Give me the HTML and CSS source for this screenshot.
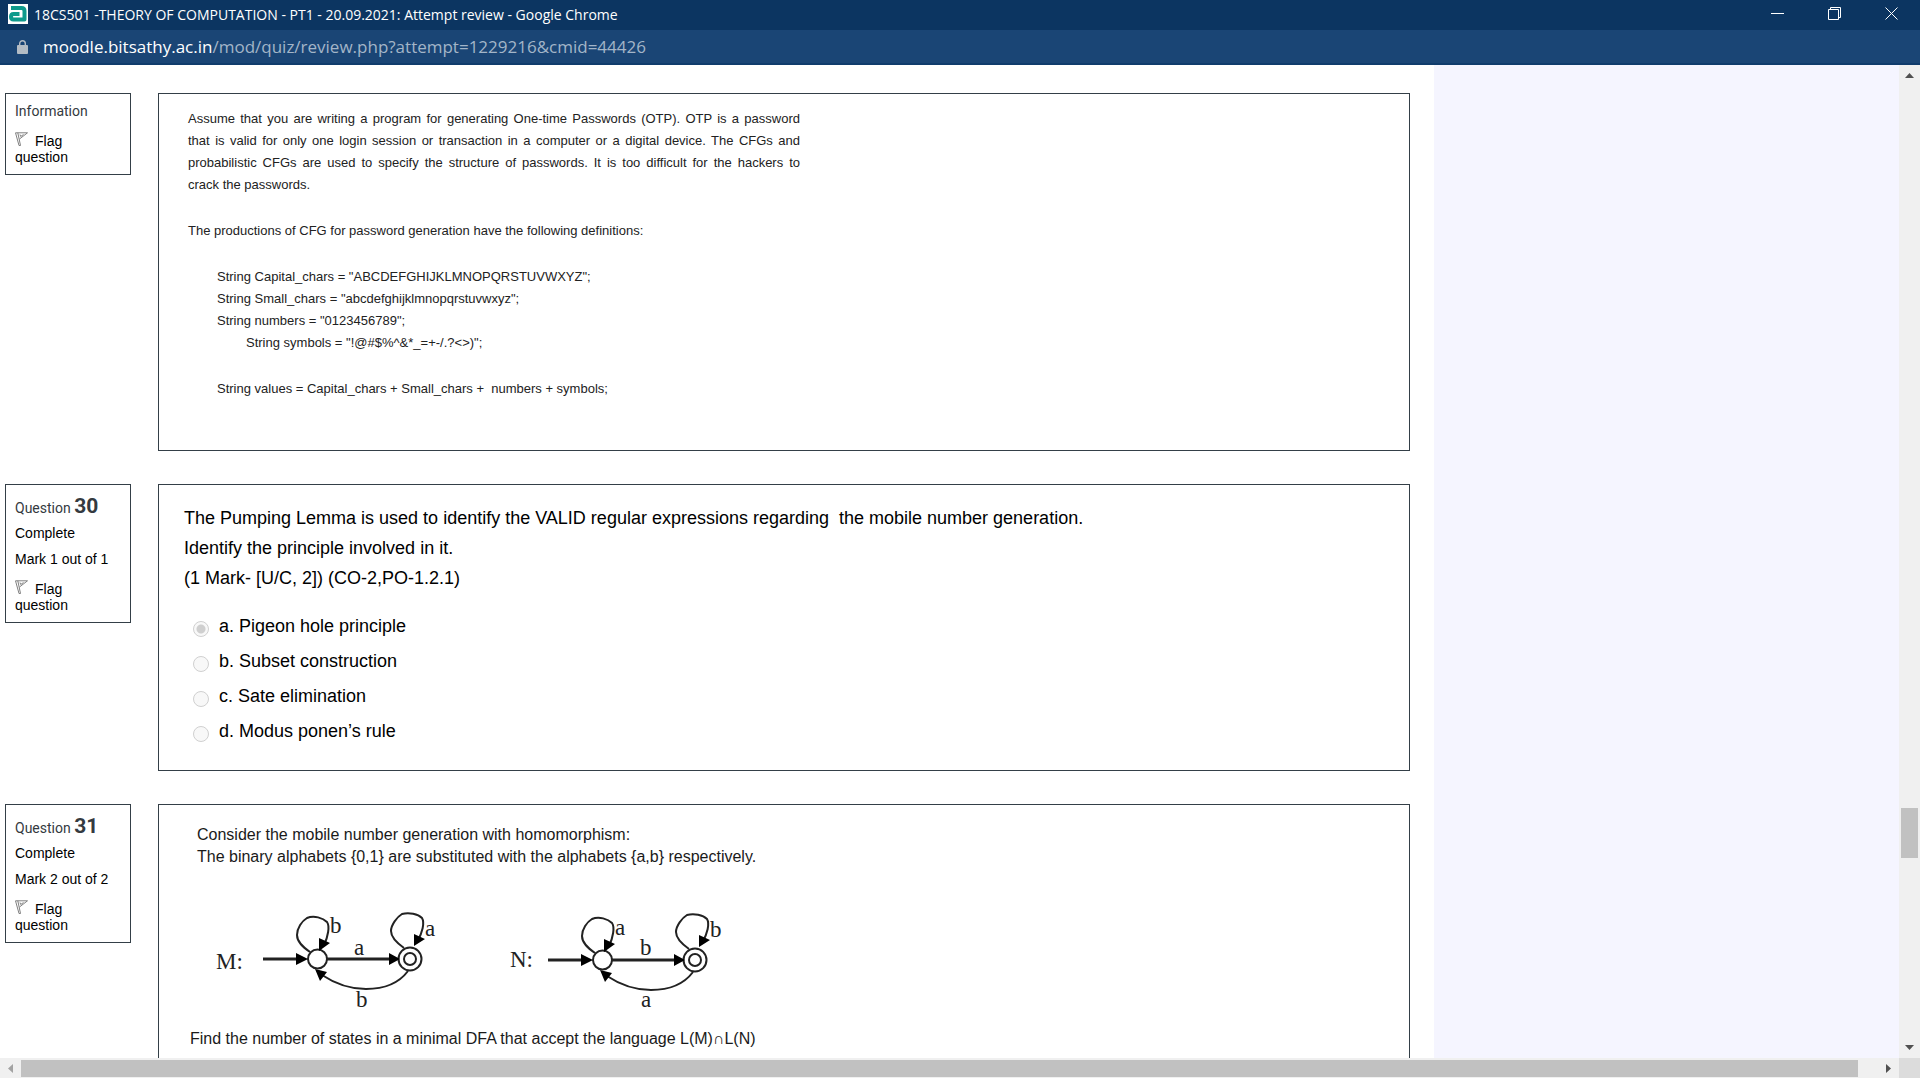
FILE: index.html
```html
<!DOCTYPE html>
<html lang="en">
<head>
<meta charset="utf-8">
<title>18CS501 -THEORY OF COMPUTATION - PT1 - 20.09.2021: Attempt review</title>
<link rel="stylesheet" href="styles.css">
</head>
<body>
<header class="titlebar">
  <svg class="favicon" width="20" height="20" viewBox="0 0 20 20" aria-hidden="true">
    <rect width="20" height="20" fill="#fff"/>
    <path d="M3 4H13.500Q16.500 4 16.500 7V15.500H5.500Q3 15.500 3 12.800Q3 10 5.500 10H11.500" fill="none" stroke="#0f9a8c" stroke-width="4" stroke-linejoin="round"/>
  </svg>
  <h1 class="title">18CS501 -THEORY OF COMPUTATION - PT1 - 20.09.2021: Attempt review - Google Chrome</h1>
  <div class="controls">
    <button class="control" aria-label="Minimize"><svg width="13" height="13" viewBox="0 0 13 13"><path d="M0 6.500H13"/></svg></button>
    <button class="control" aria-label="Restore"><svg width="13" height="13" viewBox="0 0 13 13"><path d="M.5 2.500H10.500V12.500H.5ZM2.500 2.500V.5H12.500V10.500H10.500"/></svg></button>
    <button class="control" aria-label="Close"><svg width="13" height="13" viewBox="0 0 13 13"><path d="M.5 .5L12.500 12.500M12.500 .5L.5 12.500"/></svg></button>
  </div>
</header>
<div class="addressbar">
  <svg class="lock" width="11" height="14" viewBox="0 0 11 14" aria-hidden="true">
    <rect y="5" width="11" height="9" rx="1" fill="#b4bcc4"/>
    <path d="M2.700 5.500V3.500a2.800 2.800 0 0 1 5.600 0V5.500" fill="none" stroke="#b4bcc4" stroke-width="1.400"/>
  </svg>
  <span class="url"><span class="host">moodle.bitsathy.ac.in</span>/mod/quiz/review.php?attempt=1229216&amp;cmid=44426</span>
</div>

<div class="viewport">
  <main class="page">
    <section class="question">
      <aside class="info">
        <h2 class="info-title">Information</h2>
        <a class="flag" href="#"><svg class="flag-icon" width="13" height="14" viewBox="0 0 13 14" aria-hidden="true"><path d="M.5 .8L4 13.500H5.500L2.800 .8M.5 .8H12.500L4.500 7M5 2.500L5.700 4.500L8.500 2.500"/></svg>Flag question</a>
      </aside>
      <div class="content stimulus">
        <p class="justified">Assume that you are writing a program for generating One-time Passwords (OTP). OTP is a password that is valid for only one login session or transaction in a computer or a digital device. The CFGs and probabilistic CFGs are used to specify the structure of passwords. It is too difficult for the hackers to crack&nbsp;the&nbsp;passwords.</p>
        <p>The productions of CFG for password generation have the following definitions:</p>
        <p class="code">String Capital_chars = "ABCDEFGHIJKLMNOPQRSTUVWXYZ";<br>String Small_chars = "abcdefghijklmnopqrstuvwxyz";<br>String numbers = "0123456789";<br><span class="deeper">String symbols = "!@#$%^&amp;*_=+-/.?&lt;&gt;)";</span></p>
        <p class="code">String values = Capital_chars + Small_chars +&nbsp; numbers + symbols;</p>
      </div>
    </section>

    <section class="question">
      <aside class="info">
        <h2 class="info-title numbered">Question <span class="number">30</span></h2>
        <p class="state">Complete</p>
        <p class="grade">Mark 1 out of 1</p>
        <a class="flag" href="#"><svg class="flag-icon" width="13" height="14" viewBox="0 0 13 14" aria-hidden="true"><path d="M.5 .8L4 13.500H5.500L2.800 .8M.5 .8H12.500L4.500 7M5 2.500L5.700 4.500L8.500 2.500"/></svg>Flag question</a>
      </aside>
      <div class="content choice">
        <p>The Pumping Lemma is used to identify the VALID regular expressions regarding&nbsp; the mobile number generation.<br>Identify the principle involved in it.<br>(1 Mark- [U/C, 2]) (CO-2,PO-1.2.1)</p>
        <div class="answers">
          <div class="answer"><input type="radio" name="q30" id="q30a" checked disabled><label for="q30a">a. Pigeon hole principle</label></div>
          <div class="answer"><input type="radio" name="q30" id="q30b" disabled><label for="q30b">b. Subset construction</label></div>
          <div class="answer"><input type="radio" name="q30" id="q30c" disabled><label for="q30c">c. Sate elimination</label></div>
          <div class="answer"><input type="radio" name="q30" id="q30d" disabled><label for="q30d">d. Modus ponen’s rule</label></div>
        </div>
      </div>
    </section>

    <section class="question">
      <aside class="info">
        <h2 class="info-title numbered">Question <span class="number">31</span></h2>
        <p class="state">Complete</p>
        <p class="grade">Mark 2 out of 2</p>
        <a class="flag" href="#"><svg class="flag-icon" width="13" height="14" viewBox="0 0 13 14" aria-hidden="true"><path d="M.5 .8L4 13.500H5.500L2.800 .8M.5 .8H12.500L4.500 7M5 2.500L5.700 4.500L8.500 2.500"/></svg>Flag question</a>
      </aside>
      <div class="content automata">
        <p class="lead">Consider the mobile number generation with homomorphism:<br>The binary alphabets {0,1} are substituted with the alphabets {a,b} respectively.</p>
        <svg class="diagram" width="580" height="160" viewBox="190 868 580 160" role="img" aria-label="State diagrams of the automata M and N">
          <defs>
            <g id="machine">
              <g class="edge">
                <path class="arrow" d="M263 959H300M327 959H392"/>
                <path d="M310 952C303 947 297 942 297 935C297 928 302 921 307 918C314 915 323 918 327 922C330 926 328 937 324 945"/>
                <path d="M404 948C397 943 391 937 391 931C391 925 397 917 402 914C409 912 418 914 422 918C425 923 422 933 418 940"/>
                <path d="M408 971C402 979 391 989 366 989C348 989 334 983 322 975"/>
                <circle cx="317.500" cy="959" r="9.500"/>
                <circle cx="410" cy="959" r="11.500"/>
                <circle cx="410" cy="959" r="6"/>
              </g>
              <path class="head" d="M308 959L296 953V965ZM400 959L389 953V965ZM319 951V938L330 943ZM414 946V934L425 939ZM315 969L327 972L320 981Z"/>
            </g>
          </defs>
          <use href="#machine"/>
          <use href="#machine" x="285" y="1"/>
          <g class="symbols">
            <text x="216" y="969">M:</text><text x="330" y="933">b</text><text x="425" y="936">a</text><text x="354" y="955">a</text><text x="356" y="1007">b</text>
            <text x="510" y="967">N:</text><text x="615" y="935">a</text><text x="710" y="937">b</text><text x="640" y="955">b</text><text x="641" y="1007">a</text>
          </g>
        </svg>
        <p class="task">Find the number of states in a minimal DFA that accept the language L(M)∩L(N)</p>
      </div>
    </section>
  </main>
  <div class="gutter"></div>
  <div class="scroll scroll-y">
    <button class="step" aria-label="Scroll up"><svg width="9" height="5" viewBox="0 0 9 5"><path d="M0 5L4.500 0L9 5Z"/></svg></button>
    <div class="track-y"><div class="thumb"></div></div>
    <button class="step" aria-label="Scroll down"><svg width="9" height="5" viewBox="0 0 9 5"><path d="M0 0L4.500 5L9 0Z"/></svg></button>
  </div>
</div>
<div class="scroll scroll-x">
  <button class="step spent" aria-label="Scroll left"><svg width="5" height="9" viewBox="0 0 5 9"><path d="M5 0L0 4.500L5 9Z"/></svg></button>
  <div class="track-x"><div class="thumb"></div></div>
  <button class="step" aria-label="Scroll right"><svg width="5" height="9" viewBox="0 0 5 9"><path d="M0 0L5 4.500L0 9Z"/></svg></button>
  <div class="corner"></div>
</div>
</body>
</html>
```
FILE: styles.css
```css
* { box-sizing: border-box; }

body {
  margin: 0;
  height: 100vh;
  display: flex;
  flex-direction: column;
  overflow: hidden;
  background: #fff;
  color: #000;
  font-family: "Liberation Sans", Arial, sans-serif;
}

h1, h2, p { margin: 0; font-weight: 400; }
button { border: 0; padding: 0; background: none; }

/* Window frame */
.titlebar {
  flex: none;
  display: flex;
  align-items: center;
  height: 30px;
  padding-left: 8px;
  background: #0c3561;
  color: #fff;
}
.favicon { margin-right: 6px; margin-bottom: 2px; }
.title { flex: 1; font: 14px/28px "Open Sans", "Noto Sans", sans-serif; }
.controls { display: flex; }
.control {
  display: flex;
  align-items: center;
  justify-content: center;
  width: 57px;
  height: 30px;
  padding-bottom: 3px;
}
.control svg { fill: none; stroke: #fff; }

.addressbar {
  flex: none;
  display: flex;
  align-items: center;
  gap: 15px;
  height: 35px;
  padding-left: 17px;
  background: #1a4575;
  border-bottom: 2px solid #103c6c;
}
.url { font: 17px/32px "Open Sans", "Noto Sans", sans-serif; color: #a3b5c8; }
.host { color: #fff; }

/* Page area */
.viewport { flex: 1; min-height: 0; display: flex; overflow: hidden; }
.page {
  flex: 1;
  display: flex;
  flex-direction: column;
  gap: 33px;
  padding: 28px 24px 0 5px;
}
.gutter { width: 465px; background: #f5f5ff; }

.question { display: flex; align-items: flex-start; gap: 27px; }
.info, .content { border: 1px solid #343f47; }
.info {
  flex: none;
  width: 126px;
  padding: 9px 16px 9px 9px;
  font-size: 14px;
  line-height: 16px;
}
.info-title { font: 14px/16px Roboto, sans-serif; color: #343a40; }
.numbered { line-height: 24px; }
.number { font-size: 21px; font-weight: 700; }
.state { margin-top: 5px; }
.grade { margin-top: 10px; }
.flag { display: block; margin-top: 13px; color: #000; text-decoration: none; }
.flag-icon { margin-right: 7px; fill: none; stroke: #808080; vertical-align: 0; }

.content { flex: 1; }

.stimulus { padding: 14px 29px 50px; font-size: 13px; line-height: 22px; color: #222; }
.stimulus p + p { margin-top: 24px; }
.justified { width: 612px; text-align: justify; }
.code { padding-left: 29px; }
.deeper { padding-left: 29px; }

.choice { padding: 18px 25px 22px; font-size: 18px; line-height: 30px; }
.answers { margin-top: 15px; }
.answer { display: flex; align-items: center; gap: 10px; height: 35px; padding-left: 9px; }
.answer input {
  appearance: none;
  width: 16px;
  height: 16px;
  margin: 6px 0 0;
  border: 1px solid #d0d0d0;
  border-radius: 50%;
  background: #f8f8f8;
}
.answer input:checked { background: radial-gradient(circle, #cfcfcf 4px, #f8f8f8 5px); }

.automata { padding: 19px 31px 40px; font-size: 16px; line-height: 22px; color: #1a1a1a; }
.lead { padding-left: 7px; }
.diagram { display: block; }
.edge { fill: none; stroke: #222; stroke-width: 2; }
.arrow { stroke-width: 3; }
.head { fill: #000; }
.symbols { font: 23px "Liberation Serif", serif; fill: #222; }

/* Scrollbars */
.scroll { flex: none; display: flex; background: #f0f0f0; }
.scroll-y { flex-direction: column; width: 21px; }
.scroll-x { height: 20px; }
.step {
  flex: none;
  display: flex;
  align-items: center;
  justify-content: center;
  width: 21px;
  height: 21px;
  fill: #505050;
}
.spent { fill: #a3a3a3; }
.thumb { background: #c1c1c1; }
.track-y { flex: 1; display: grid; grid-template-rows: 722fr 50px 179fr; padding: 0 2px; }
.track-y .thumb { grid-row: 2; }
.track-x { flex: 1; display: grid; grid-template-columns: 1fr 20px; padding: 2px 0 1px; }
.corner { width: 21px; background: #dcdcdc; }
```
